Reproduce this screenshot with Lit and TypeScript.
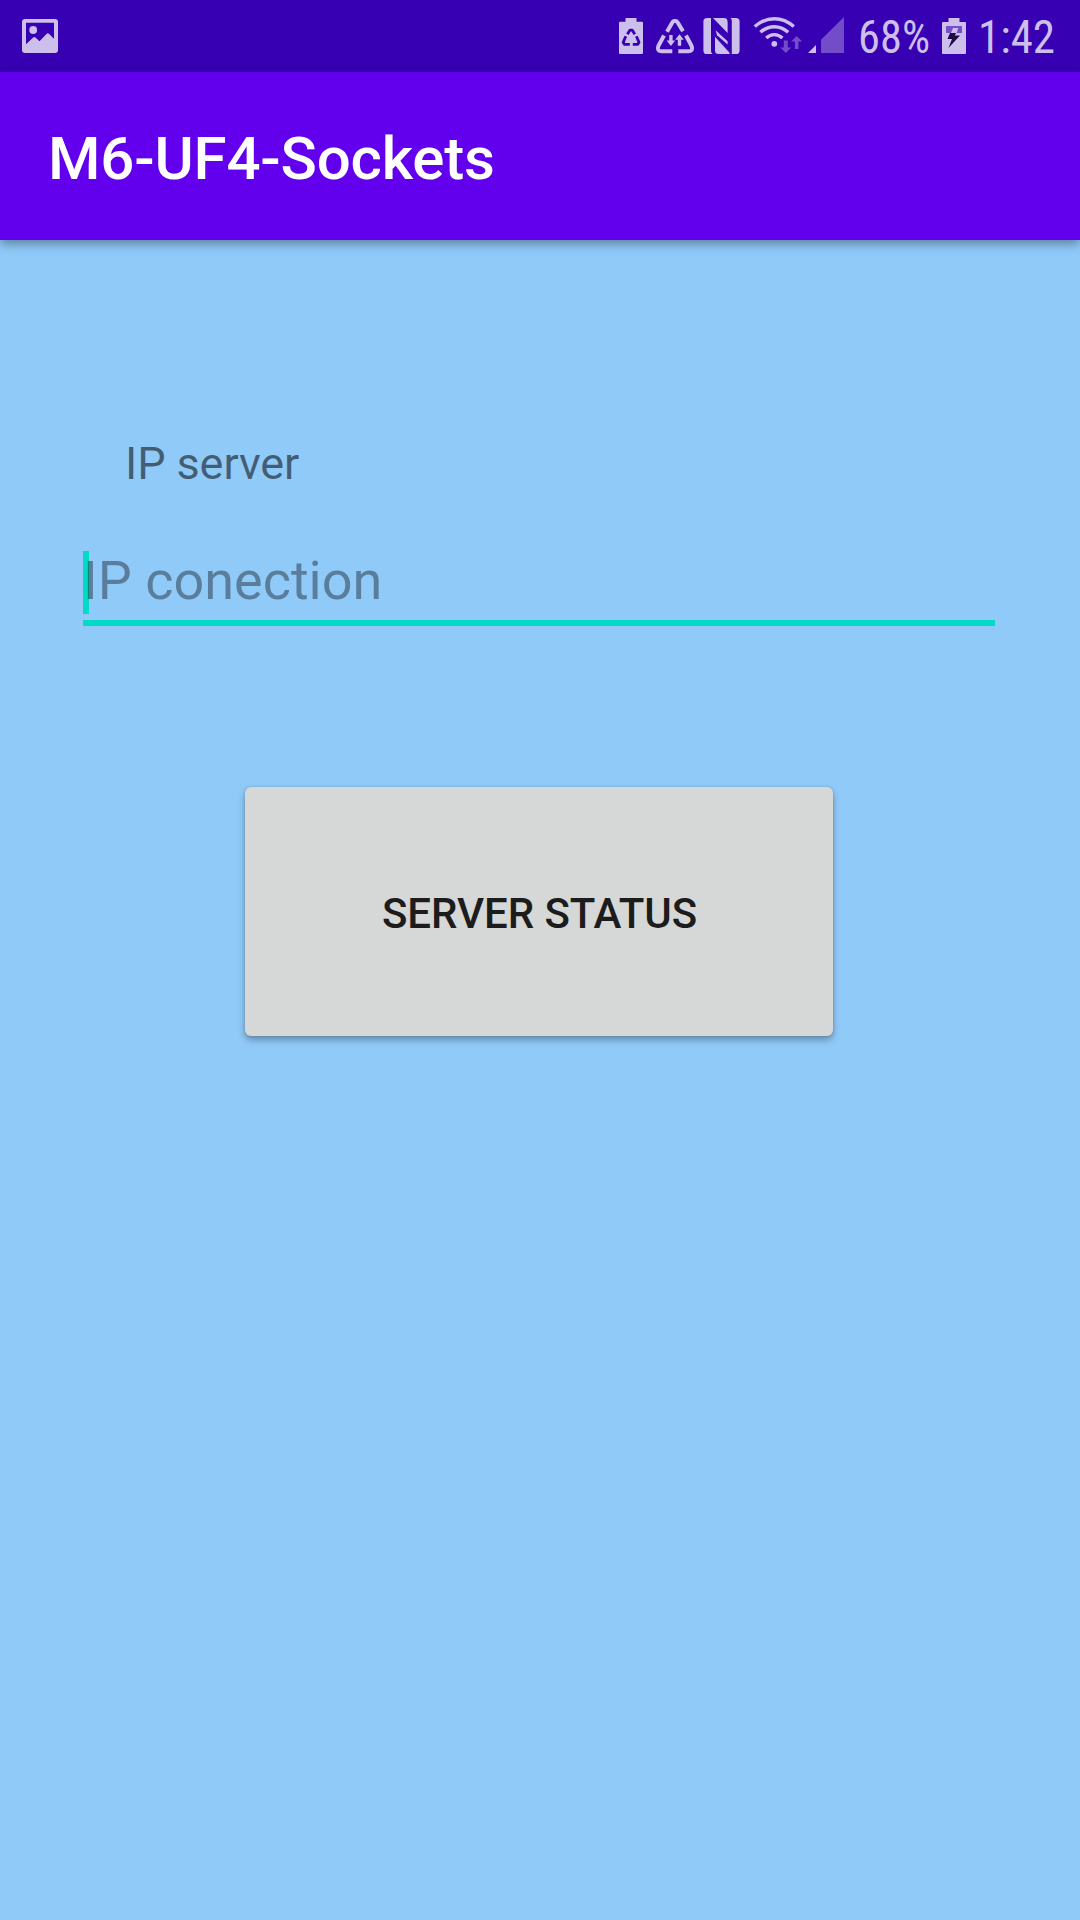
import { LitElement, html, css, svg } from "lit";
import { customElement } from "lit/decorators.js";

@customElement("status-bar")
class StatusBar extends LitElement {
  static styles = css`
    :host { display: flex; height: 72px; background: #3700b3; justify-content: space-between; padding: 0 24px 0 20px; color: #cdbfec; }
    .group { display: flex; }
    svg { display: block; height: 72px; fill: currentColor; flex: none; }
    .line { fill: none; stroke: currentColor; }
    .cut { fill: none; stroke: #3700b3; }
    .dim { opacity: 0.4; }
    .label { font-family: "Roboto Condensed", Roboto, sans-serif; font-size: 45.5px; }
  `;

  // All glyphs share the bar's horizontal coordinate space.
  icon(x: number, width: number, body: unknown) {
    return html`<svg width=${width} height="72" viewBox="${x} 0 ${width} 72">${body}</svg>`;
  }

  render() {
    return html`
      <div class="group">
        ${this.icon(20, 40, svg`
          <path fill-rule="evenodd" d="M25 19H55a3 3 0 0 1 3 3V50a3 3 0 0 1-3 3H25a3 3 0 0 1-3-3V22a3 3 0 0 1 3-3ZM26 22.7V44.3L33.2 37.4Q34.3 36.5 35.4 37.4L39.5 41.2L46.7 33.8Q47.8 32.8 48.9 33.8L54 38.8V22.7Z"/>
          <circle cx="33.2" cy="30" r="3.9"/>`)}
      </div>
      <div class="group">
        ${this.icon(615, 35, svg`
          <path d="M625.5 18H636.5V21.7H642a1 1 0 0 1 1 1V53a1 1 0 0 1-1 1H620a1 1 0 0 1-1-1V22.7a1 1 0 0 1 1-1H625.5Z"/>
          <g class="cut" stroke-width="2.8" stroke-linejoin="round">
            <path d="M627.4 34.2L630 30.1H632.2L634.8 34.2"/>
            <path d="M625.8 36.2L623.2 42.4L624.6 44.4H629.8"/>
            <path d="M636.4 36.2L639 42.4L637.6 44.4H632.8"/>
          </g>`)}
        ${this.icon(650, 49, svg`
          <g class="line" stroke-width="4" stroke-linejoin="round">
            <path d="M667 31.7L672.6 22Q673.2 21 674.4 21H675.6Q676.8 21 677.4 22L683 31.3"/>
            <path d="M664 35.5L658.4 46Q656.5 51.2 661.3 51.2H672.3"/>
            <path d="M686 35.5L691.6 46Q693.5 51.2 688.7 51.2H678.3"/>
          </g>
          <path d="M669.2 35H672.6V40.5H675.2L670.9 46L666.6 40.5H669.2Z"/>
          <path d="M677.8 45.7H681.2V39.7H683.8L679.5 34.2L675.2 39.7H677.8Z"/>`)}
        ${this.icon(699, 49, svg`
          <path d="M707 18H711V51Q711 53 712.5 54H707a3.6 3.6 0 0 1-3.6-3.6V21.6A3.6 3.6 0 0 1 707 18Z"/>
          <path d="M713 18H724Q727.6 18 727.6 22V33Z"/>
          <path d="M715.6 30.2L727.6 41.2V44.6L717 35.2Z"/>
          <path d="M715 36.8L730 53.2L729 54H718.5Q715 54 715 50.5Z"/>
          <path d="M730.6 18H736a3.6 3.6 0 0 1 3.6 3.6V50.4A3.6 3.6 0 0 1 736 54H731.8V21Q731.8 19 730.6 18Z"/>`)}
        ${this.icon(748, 58, svg`
          <g class="line" stroke-width="3.4">
            <path d="M754.8 26.6Q763.5 18.7 774.3 18.7T793.8 26.6"/>
            <path d="M760.4 32.3Q766.5 26.7 774.3 26.7T788.2 32.3"/>
            <path d="M766.2 38Q769.8 34.6 774.3 34.6T782.4 38"/>
          </g>
          <circle cx="774.3" cy="43.8" r="2.9"/>
          <path class="dim" d="M783.8 40.5H787.8V47.5H791.3L785.8 53L780.3 47.5H783.8ZM794.9 49H798.5V41.5H802.2L796.7 36L791.2 41.5H794.9Z"/>`)}
        ${this.icon(806, 48, svg`
          <path d="M816 45V53H808Z"/>
          <path class="dim" d="M844 17V53H821V39.7Z"/>`)}
        ${this.icon(854, 83, svg`<text class="label" x="858" y="53.2" textLength="72" lengthAdjust="spacingAndGlyphs">68%</text>`)}
        ${this.icon(937, 38, svg`
          <path d="M948.5 18H959.5V22H965a1 1 0 0 1 1 1V53a1 1 0 0 1-1 1H943a1 1 0 0 1-1-1V23a1 1 0 0 1 1-1H948.5Z"/>
          <path fill="#7650c9" d="M946 26H962V33H946Z"/>
          <path d="M953 28H958.3L956.5 33H951Z"/>
          <path fill="#1d0b45" d="M950 33H956L954.8 35.5H960L948.5 48L952 39H947.5Z"/>`)}
        ${this.icon(975, 81, svg`<text class="label" x="978" y="53.2" textLength="77" lengthAdjust="spacingAndGlyphs">1:42</text>`)}
      </div>`;
  }
}

@customElement("app-root")
class AppRoot extends LitElement {
  static styles = css`
    :host { display: flex; flex-direction: column; height: 1920px; background: #90caf9; font-family: Roboto, sans-serif; overflow: hidden; }
    .bar { height: 168px; box-sizing: border-box; background: #6200ee; color: #fff; display: flex; align-items: center; padding: 6px 48px 0; font-size: 60px; font-weight: 500; line-height: 70px; letter-spacing: -0.17px; box-shadow: 0 4px 10px rgba(0, 0, 0, 0.36); z-index: 1; }
    .content { display: flex; flex-direction: column; }
    .caption { margin: 197px 0 0 125px; font-size: 45px; line-height: 54px; letter-spacing: -0.1px; color: rgba(0, 0, 0, 0.54); white-space: pre; }
    .field { margin: 60px 85px 0 83px; height: 75px; box-sizing: border-box; border-bottom: 6px solid #03dac5; position: relative; font-size: 54px; line-height: 59px; color: rgba(0, 0, 0, 0.38); }
    .caret { position: absolute; left: 0; top: 0; width: 6px; height: 63px; background: #03dac5; }
    .hint { position: relative; }
    .action { margin: 161px 247px 0 245px; height: 249px; border: 0; border-radius: 6px; background: #d6d7d7; color: #1c1c1c; font: 500 42px/50px Roboto, sans-serif; letter-spacing: -0.05px; padding: 4px 0 0 1px; box-shadow: 0 4px 7px rgba(0, 0, 0, 0.3), 0 0 3px rgba(0, 0, 0, 0.14); }
  `;

  render() {
    return html`
      <status-bar></status-bar>
      <header class="bar">M6-UF4-Sockets</header>
      <main class="content">
        <label class="caption">IP server</label>
        <div class="field"><span class="caret"></span><span class="hint">IP conection</span></div>
        <button class="action">SERVER STATUS</button>
      </main>`;
  }
}
